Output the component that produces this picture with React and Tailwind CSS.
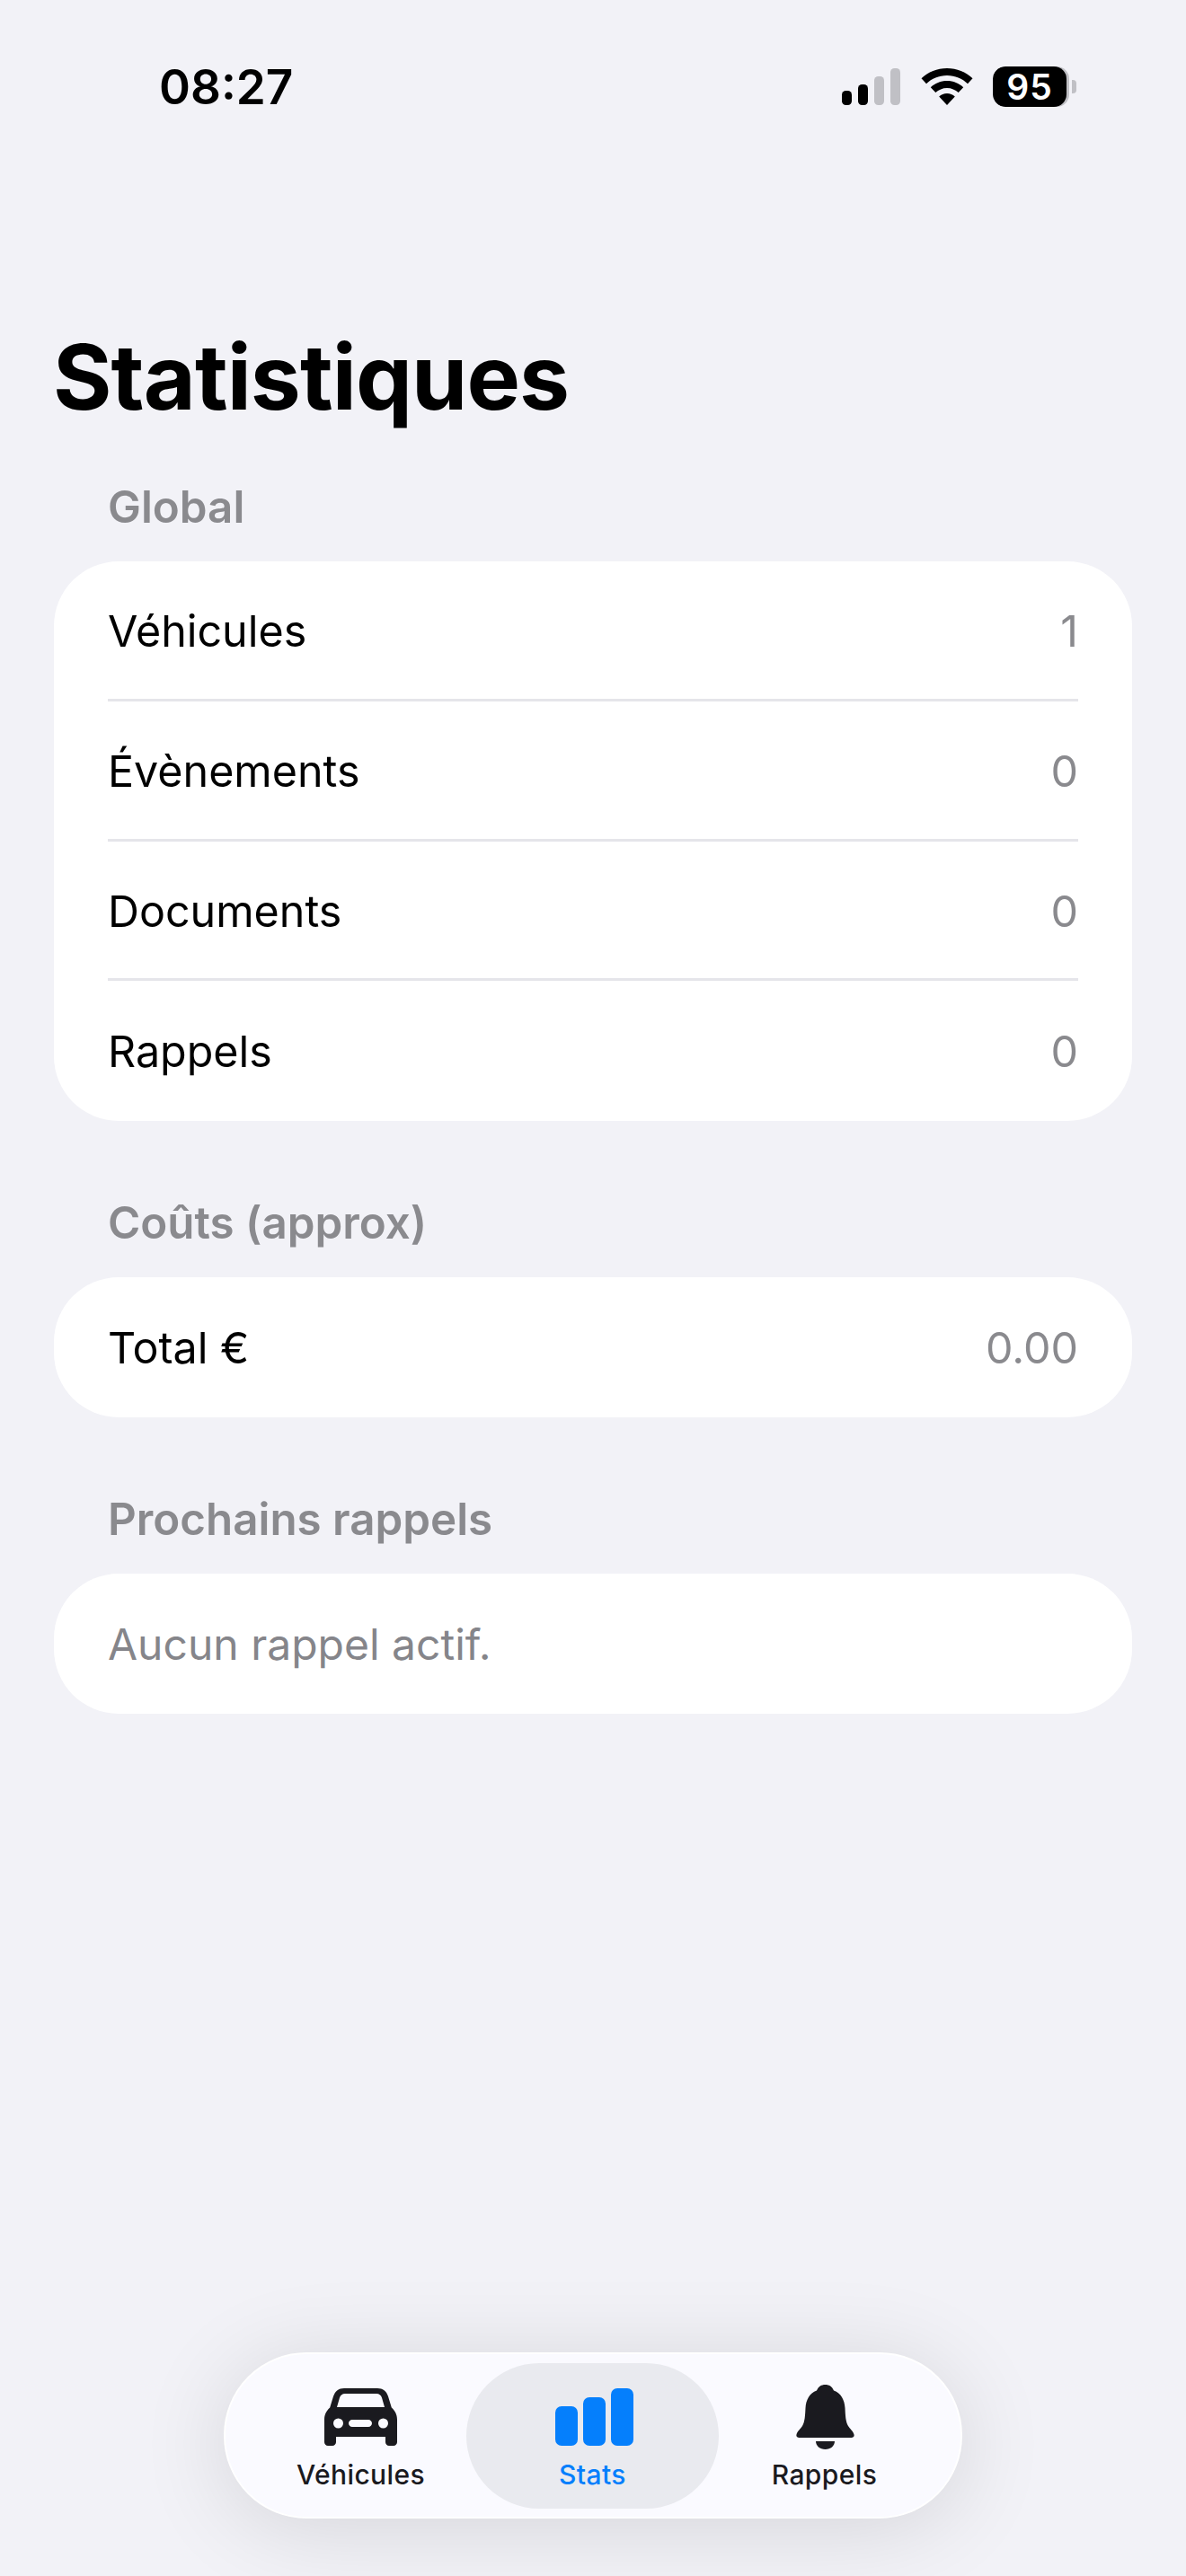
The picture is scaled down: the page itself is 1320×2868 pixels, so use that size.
const font = { fontFamily: '"Inter", "Noto Sans", sans-serif' };

function Section({ title, mt, children }) {
  return (
    <section className={mt}>
      <h2 className="pl-[120px] h-[58px] mb-[31px] flex items-center text-[49.3px] leading-none font-semibold text-[#8a8a8e]">{title}</h2>
      <div className="mx-[60px] bg-white rounded-[72px] overflow-hidden">{children}</div>
    </section>
  );
}

function Row({ label, value, last, muted }) {
  return (
    <div className="px-[60px]">
      <div className={`h-[155.75px] flex items-center justify-between leading-none ${muted ? "text-[48px]" : "text-[48.4px]"} ${last ? "pt-[2px]" : "pt-[4px] border-b-[3px] border-[#e5e5ea]"}`}>
        <span className={muted ? "text-[#85858a]" : "text-black"}>{label}</span>
        {value !== undefined && <span className="text-[#8a8a8e]">{value}</span>}
      </div>
    </div>
  );
}

function StatusBar() {
  return (
    <div className="h-[170px] flex items-start justify-between pl-[177px] pr-[122px]">
      <span className="mt-[67px] text-[53px] leading-[60px] font-semibold text-black">08:27</span>
      <div className="mt-[74px] flex items-start">
        <svg width="66" height="45" viewBox="0 0 66 45" className="block mr-[22px]">
          <rect x="0" y="27" width="11" height="16" rx="4.5" fill="#000" />
          <rect x="18" y="20" width="11" height="23" rx="4.5" fill="#000" />
          <rect x="36" y="11" width="11" height="32" rx="4.5" fill="#c0c0c5" />
          <rect x="54" y="2" width="11" height="41" rx="4.5" fill="#c0c0c5" />
        </svg>
        <svg width="58" height="45" viewBox="0 0 58 45" className="block mr-[22px]">
          <path d="M29 2c11 0 21 4.200 28.500 11.300L52 19.200C46 13.500 38 10 29 10S12 13.500 6 19.200L.5 13.300C8 6.200 18 2 29 2Z" fill="#000" />
          <path d="M29 16c7 0 13.400 2.700 18.200 7.200l-5.500 5.900C38.400 26 33.900 24 29 24s-9.400 2-12.700 5.100l-5.500-5.900C15.600 18.700 22 16 29 16Z" fill="#000" />
          <path d="M29 30c3.400 0 6.500 1.300 8.800 3.500L29 43l-8.800-9.500C22.500 31.300 25.600 30 29 30Z" fill="#000" />
        </svg>
        <div className="w-[85px] h-[45px] rounded-[14px] bg-[#c0c0c5] overflow-hidden">
          <div className="w-[82px] h-[45px] bg-black rounded-[14px] flex items-center justify-center text-white text-[39px] leading-none font-semibold tracking-[1px]">95</div>
        </div>
        <div className="ml-[3px] mt-[15px] w-[5px] h-[15px] rounded-r-[4px] bg-[#c0c0c5]" />
      </div>
    </div>
  );
}

function Car() {
  return (
    <svg width="81" height="64" viewBox="0 0 81 64" className="block">
      <path
        fillRule="evenodd"
        fill="#1a1a1f"
        d="M22 0h37c6 0 10 3 12 9l3.800 12.500C78.500 25 81 29 81 35v25c0 2.200-1.800 4-4 4h-5c-2.200 0-4-1.800-4-4v-6H13v6c0 2.200-1.800 4-4 4H4c-2.200 0-4-1.800-4-4V35c0-6 2.500-10 6.200-13.500L10 9c2-6 6-9 12-9ZM23 6c-3 0-5 1.500-6 4.500L14 21h53l-3-10.500C63 7.500 61 6 58 6ZM15.500 33.500a5.500 5.500 0 1 0 0 11 5.500 5.500 0 0 0 0-11Zm50 0a5.500 5.500 0 1 0 0 11 5.500 5.500 0 0 0 0-11ZM31 35c-2.200 0-4 1.800-4 4s1.800 4 4 4h18c2.200 0 4-1.800 4-4s-1.800-4-4-4Z"
      />
    </svg>
  );
}

function Bars() {
  return (
    <svg width="87" height="64" viewBox="0 0 87 64" className="block ml-[3px]">
      <rect x="0" y="20" width="25" height="44" rx="7" fill="#057ffc" />
      <rect x="31" y="10" width="25" height="54" rx="7" fill="#057ffc" />
      <rect x="62" y="0" width="25" height="64" rx="7" fill="#057ffc" />
    </svg>
  );
}

function Bell() {
  return (
    <svg width="65" height="72" viewBox="0 0 65 72" className="block -mb-[4px] ml-[1px]">
      <path
        fill="#1a1a1f"
        d="M32.500 0c4.500 0 7.500 2 9.500 6.500C50 9.500 54 17 54.500 26c.4 8 .6 15 3.500 20 1.800 3 5.500 5.500 6.500 9.500.6 2.500-.8 3.500-3 3.500H3.500c-2.200 0-3.600-1-3-3.500C1.500 51.500 5.200 49 7 46c2.900-5 3.100-12 3.500-20C11 17 15 9.500 23 6.500 25 2 28 0 32.500 0Z"
      />
      <path fill="#1a1a1f" d="M22 63h21c0 5-4.500 9-10.500 9S22 68 22 63Z" />
    </svg>
  );
}

function Tab({ icon, label, active, className }) {
  return (
    <div className={`flex flex-col items-center pt-[20px] ${className}`}>
      <div className="h-[72px] flex items-end">{icon}</div>
      <span className={`mt-[14px] text-[30px] leading-[36px] font-medium tracking-[0.4px] ${active ? "text-[#057ffc]" : "text-[#1a1a1f]"}`}>{label}</span>
    </div>
  );
}

export default function App() {
  return (
    <div style={font} className="w-[1320px] h-[2868px] bg-[#f2f2f7] flex flex-col">
      <StatusBar />
      <div className="flex-1">
        <h1 className="mt-[192px] pl-[59px] h-[116px] flex items-center text-[100px] leading-none font-bold text-black tracking-[-0.9px]">Statistiques</h1>
        <Section title="Global" mt="mt-[58px]">
          <Row label="Véhicules" value="1" />
          <Row label="Évènements" value="0" />
          <Row label="Documents" value="0" />
          <Row label="Rappels" value="0" last />
        </Section>
        <Section title="Coûts (approx)" mt="mt-[85px]">
          <Row label="Total €" value="0.00" last />
        </Section>
        <Section title="Prochains rappels" mt="mt-[85px]">
          <Row label="Aucun rappel actif." muted last />
        </Section>
      </div>
      <div className="flex justify-center pb-[64px]">
        <nav className="w-[822px] h-[185px] rounded-[92px] bg-[#fafaff] border-[2px] border-white shadow-[0_10px_100px_rgba(0,0,0,0.12)] flex items-start pt-[10px] pl-[33px] pr-[34px]">
          <Tab icon={<Car />} label="Véhicules" className="flex-1" />
          <Tab icon={<Bars />} label="Stats" active className="w-[281px] h-[162px] rounded-[81px] bg-[#e9eaef]" />
          <Tab icon={<Bell />} label="Rappels" className="flex-1" />
        </nav>
      </div>
    </div>
  );
}
